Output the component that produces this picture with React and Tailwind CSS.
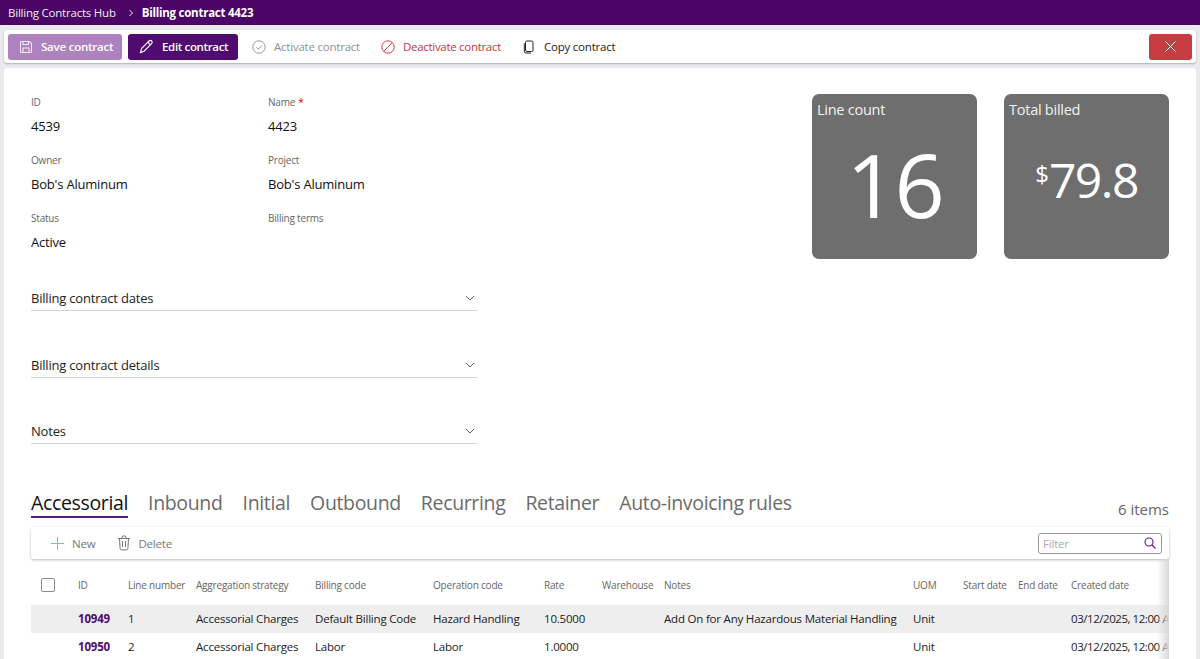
import React from "react";

const F = { fontFamily: '"Open Sans","Noto Sans",sans-serif' };
const cols = ["w-[47px]","w-[50px]","w-[68px]","w-[119px]","w-[118px]","w-[111px]","w-[58px]","w-[62px]","w-[249px]","w-[50px]","w-[55px]","w-[53px]","w-[98px]"];
const heads = ["","ID","Line number","Aggregation strategy","Billing code","Operation code","Rate","Warehouse","Notes","UOM","Start date","End date","Created date"];
const rows = [
  ["","10949","1","Accessorial Charges","Default Billing Code","Hazard Handling","10.5000","","Add On for Any Hazardous Material Handling","Unit","","","03/12/2025, 12:00 AM"],
  ["","10950","2","Accessorial Charges","Labor","Labor","1.0000","","","Unit","","","03/12/2025, 12:00 AM"],
];

function Field({ label, value, req }) {
  return (
    <div className="h-[58px]">
      <div className="text-[10px] leading-[14px] text-[#666] tracking-[-0.2px]">
        {label}{req && <span className="text-[#c00] ml-[3px]">*</span>}
      </div>
      {value && <div className="mt-[8px] text-[13px] leading-[18px] text-[#111] tracking-[-0.2px]">{value}</div>}
    </div>
  );
}

function Section({ title, mb }) {
  return (
    <div className={`w-[446px] h-[23px] border-b border-[#d4d4d4] flex items-start justify-between ${mb}`}>
      <span className="text-[13px] leading-[20px] text-[#222] tracking-[-0.2px]">{title}</span>
      <svg width="10" height="6" viewBox="0 0 10 6" className="mt-[7px] mr-[2px]" fill="none" stroke="#666" strokeWidth="1"><path d="M1 1l4 4 4-4" /></svg>
    </div>
  );
}

function Stat({ title, children }) {
  return (
    <div className="w-[165px] h-[165px] rounded-[7px] bg-[#6e6e6e] text-white px-[5px] pt-[6px] flex flex-col">
      <div className="text-[14.5px] leading-[20px] text-[#f2f2f2] tracking-[-0.25px]">{title}</div>
      <div className="flex-1 flex items-center justify-center pb-[14px]">{children}</div>
    </div>
  );
}

export default function App() {
  return (
    <div style={F} className="h-[659px] w-[1200px] overflow-hidden bg-[#e9e9ee] flex flex-col">
      <header className="h-[25px] shrink-0 bg-[#4a0566] flex items-center pl-[8px] text-[11.5px] text-[#eee] tracking-[-0.22px]">
        <span>Billing Contracts Hub</span>
        <svg width="6" height="8" viewBox="0 0 6 8" className="ml-[12px] mr-[8px]" fill="none" stroke="#eee" strokeWidth="1"><path d="M1.5 1l3 3-3 3" /></svg>
        <span className="font-bold text-white tracking-[-0.25px]">Billing contract 4423</span>
      </header>

      <div className="mt-[5px] mx-[4px] h-[33px] shrink-0 rounded-[3px] bg-white shadow-[0_1px_2px_rgba(0,0,0,0.25)] flex items-center pl-[4px] pr-[4px] text-[11.5px] tracking-[-0.22px]">
        <button className="h-[26px] w-[114px] rounded-[3px] bg-[#ae82bf] text-white font-semibold flex items-center pl-[11px] gap-[8px]">
          <svg width="14" height="14" viewBox="0 0 14 14" fill="none" stroke="#f3e9f6" strokeWidth="1.1"><path d="M1.5 2.5a1 1 0 0 1 1-1h8l2 2v8a1 1 0 0 1-1 1h-9a1 1 0 0 1-1-1z" /><path d="M4 1.5v3h5.5v-3M4 12.5V8h6v4.5" /></svg>
          Save contract
        </button>
        <button className="ml-[6px] h-[26px] w-[110px] rounded-[3px] bg-[#4f0b70] text-white font-semibold flex items-center pl-[11px] gap-[8px] tracking-[-0.35px]">
          <svg width="15" height="15" viewBox="0 0 15 15" fill="none" stroke="#fff" strokeWidth="1.1"><path d="M1.500 13.500l1-4 7.500-7.500a1.600 1.600 0 0 1 2.600 2.600L5 12.200z" /><path d="M8.800 3.200l2.600 2.600" /></svg>
          Edit contract
        </button>
        <div className="ml-[14px] flex items-center gap-[8px] text-[#8f8f8f]">
          <svg width="14" height="14" viewBox="0 0 14 14" fill="none" stroke="#999" strokeWidth="1"><circle cx="7" cy="7" r="6.2" /><path d="M4.2 7.2l2 2 3.600-3.800" /></svg>
          Activate contract
        </div>
        <div className="ml-[21px] flex items-center gap-[8px] text-[#c8383c] tracking-[-0.3px]">
          <svg width="14" height="14" viewBox="0 0 14 14" fill="none" stroke="#d04347" strokeWidth="1"><circle cx="7" cy="7" r="6.2" /><path d="M2.700 11.300l8.600-8.600" /></svg>
          Deactivate contract
        </div>
        <div className="ml-[22px] flex items-center gap-[9px] text-[#222]">
          <svg width="12" height="14" viewBox="0 0 12 14" fill="none" stroke="#222" strokeWidth="1"><rect x="2.500" y="1" width="7.500" height="10.500" rx="1.500" /><path d="M2.500 3.200A1.300 1.300 0 0 0 1.300 4.500v6.800A1.700 1.700 0 0 0 3 13h5" /></svg>
          Copy contract
        </div>
        <button className="ml-auto h-[26px] w-[43px] rounded-[3px] bg-[#c63c40] flex items-center justify-center">
          <svg width="11" height="11" viewBox="0 0 11 11" fill="none" stroke="#fff" strokeWidth="1"><path d="M.5.5l10 10M10.500.5l-10 10" /></svg>
        </button>
      </div>

      <main className="mt-[5px] ml-[4px] mr-[4px] flex-1 min-h-0 rounded-t-[3px] bg-white pl-[27px] pr-[27px] pt-[26px] overflow-hidden">
        <div className="flex h-[399px]">
          <div className="w-[781px] pt-[1px]">
            <div className="grid grid-cols-[237px_209px] w-[446px]">
              <Field label="ID" value="4539" />
              <Field label="Name" value="4423" req />
              <Field label="Owner" value="Bob's Aluminum" />
              <Field label="Project" value="Bob's Aluminum" />
              <Field label="Status" value="Active" />
              <Field label="Billing terms" />
            </div>
            <div className="mt-[19px]">
              <Section title="Billing contract dates" mb="mb-[44px]" />
              <Section title="Billing contract details" mb="mb-[43px]" />
              <Section title="Notes" />
            </div>
          </div>
          <div className="flex gap-[27px]">
            <Stat title="Line count">
              <span className="text-[88px] leading-none font-normal tracking-[-2px] mt-[3px]">16</span>
            </Stat>
            <Stat title="Total billed">
              <span className="flex items-start font-normal -mt-[5px]">
                <span className="text-[24px] leading-none mt-[8px]">$</span>
                <span className="text-[48px] leading-[52px] tracking-[-1.5px]">79.8</span>
              </span>
            </Stat>
          </div>
        </div>

        <div className="w-[1138px]">
          <div className="flex items-end justify-between h-[26px] -mt-[1px]">
            <nav className="flex gap-[20px] text-[19.5px] leading-[26px] text-[#6b6b6b] tracking-[-0.35px]">
              <span className="text-[#111] border-b-2 border-[#5b1a80] h-[28px]">Accessorial</span>
              <span>Inbound</span>
              <span>Initial</span>
              <span>Outbound</span>
              <span>Recurring</span>
              <span>Retainer</span>
              <span>Auto-invoicing rules</span>
            </nav>
            <span className="text-[15px] leading-[20px] text-[#666] -mb-[1px]">6 items</span>
          </div>

          <div className="mt-[9px] h-[32px] rounded-[3px] bg-white shadow-[0_1px_3px_rgba(0,0,0,0.28)] flex items-center pl-[19px] pr-[7px] text-[11.5px] text-[#777] tracking-[-0.2px]">
            <svg width="15" height="15" viewBox="0 0 15 15" fill="none" stroke="#7cc58d" strokeWidth="1"><path d="M7.500 1v13M1 7.500h13" /></svg>
            <span className="ml-[7px] mt-[2px]">New</span>
            <svg width="14" height="16" viewBox="0 0 14 16" className="ml-[22px]" fill="none" stroke="#777" strokeWidth="1"><path d="M1 3.500h12M5 3.500V2a1 1 0 0 1 1-1h2a1 1 0 0 1 1 1v1.500M2.500 3.500l.6 10a1.500 1.500 0 0 0 1.500 1.400h4.800a1.500 1.500 0 0 0 1.500-1.400l.6-10M5.500 6v6M8.500 6v6" /></svg>
            <span className="ml-[7px] mt-[2px]">Delete</span>
            <div className="ml-auto w-[124px] h-[21px] border border-[#999] rounded-[3px] flex items-center justify-between pl-[4px] pr-[5px] text-[#aaa]">
              <span className="mt-[1px]">Filter</span>
              <svg width="12" height="12" viewBox="0 0 12 12" fill="none" stroke="#5b1a80" strokeWidth="1.1"><circle cx="5" cy="5" r="4" /><path d="M8 8l3.500 3.500" /></svg>
            </div>
          </div>

          <div className="relative overflow-hidden h-[101px]">
            <div className="h-[46px] flex items-center text-[10px] text-[#666] tracking-[-0.2px] pt-[6px]">
              {heads.map((h, i) => (
                <div key={i} className={`${cols[i]} shrink-0 whitespace-nowrap ${i === 0 ? "pl-[10px]" : ""}`}>
                  {i === 0 ? <div className="w-[14px] h-[14px] border border-[#8a8a8a] rounded-[2px]" /> : h}
                </div>
              ))}
            </div>
            {rows.map((r, ri) => (
              <div key={ri} className={`h-[28px] flex items-center text-[11.5px] text-[#222] tracking-[-0.2px] ${ri === 0 ? "bg-[#eeeeee]" : "bg-white"}`}>
                {r.map((c, i) => (
                  <div key={i} className={`${cols[i]} shrink-0 whitespace-nowrap ${i === 1 ? "font-bold text-[#4f0b70]" : ""} ${i === 12 ? "tracking-[-0.45px]" : ""}`}>{c}</div>
                ))}
              </div>
            ))}
            <div className="absolute top-0 right-0 bottom-0 w-[12px] bg-gradient-to-r from-white/0 to-[#d8d8d8]" />
          </div>
        </div>
      </main>
    </div>
  );
}
